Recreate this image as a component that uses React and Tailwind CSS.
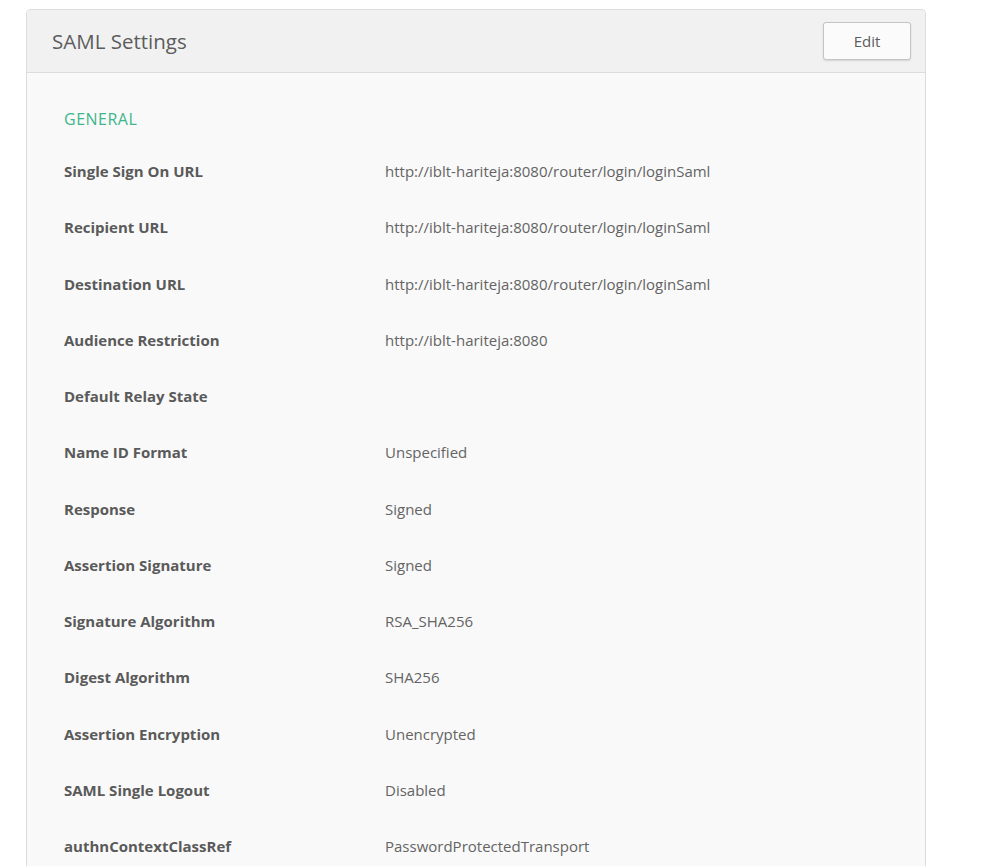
const rows = [
  ["Single Sign On URL", "http://iblt-hariteja:8080/router/login/loginSaml"],
  ["Recipient URL", "http://iblt-hariteja:8080/router/login/loginSaml"],
  ["Destination URL", "http://iblt-hariteja:8080/router/login/loginSaml"],
  ["Audience Restriction", "http://iblt-hariteja:8080"],
  ["Default Relay State", ""],
  ["Name ID Format", "Unspecified"],
  ["Response", "Signed"],
  ["Assertion Signature", "Signed"],
  ["Signature Algorithm", "RSA_SHA256"],
  ["Digest Algorithm", "SHA256"],
  ["Assertion Encryption", "Unencrypted"],
  ["SAML Single Logout", "Disabled"],
  ["authnContextClassRef", "PasswordProtectedTransport"],
];

export default function App() {
  return (
    <div className="min-h-screen bg-white pl-[26px] pt-[9px] font-['Open_Sans',sans-serif]">
      <div className="w-[900px] rounded-t-[5px] border border-b-0 border-[#dcdcdc] bg-[#f9f9f9]">
        <div className="flex h-[63px] items-center justify-between rounded-t-[5px] border-b border-[#dcdcdc] bg-[#f1f1f1] pl-[25px] pr-[14px]">
          <h2 className="text-[20.5px] text-[#5c5c5c]">SAML Settings</h2>
          <button className="h-[38px] w-[88px] rounded-[3px] border border-[#c4c4c4] bg-[#fbfbfb] text-[15px] text-[#5c5c5c] shadow-[0_1px_2px_rgba(0,0,0,0.12)]">
            Edit
          </button>
        </div>
        <div className="pl-[37px] pt-[36px] pb-[20px]">
          <div className="mb-[30px] text-[16px] leading-5 tracking-[0.5px] text-[#3fb58c]">GENERAL</div>
          {rows.map(([label, value]) => (
            <div key={label} className="flex h-[56.25px] items-start leading-6">
              <div className="w-[321px] text-[15px] font-bold text-[#5a5a5a]">{label}</div>
              <div className="text-[15px] text-[#646464]">{value}</div>
            </div>
          ))}
        </div>
      </div>
    </div>
  );
}
